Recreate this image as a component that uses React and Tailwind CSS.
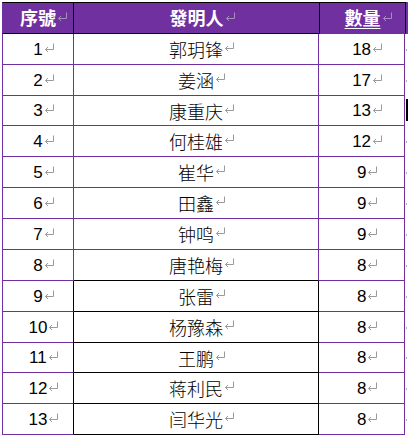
const rows = [
  ['1', '郭玥锋', '18'],
  ['2', '姜涵', '17'],
  ['3', '康重庆', '13'],
  ['4', '何桂雄', '12'],
  ['5', '崔华', '9'],
  ['6', '田鑫', '9'],
  ['7', '钟鸣', '9'],
  ['8', '唐艳梅', '8'],
  ['9', '张雷', '8'],
  ['10', '杨豫森', '8'],
  ['11', '王鹏', '8'],
  ['12', '蒋利民', '8'],
  ['13', '闫华光', '8'],
];

const tall = [31, 31, 30, 31, 31, 31, 31, 31, 31, 31, 30, 31, 31];

function Mark({ light }) {
  return (
    <svg
      width="11"
      height="10"
      viewBox="0 0 11 10"
      className="absolute left-full top-[2px] ml-[1px]"
      fill="none"
      stroke={light ? '#a68fbf' : '#9a9a9a'}
      strokeWidth="1"
    >
      <path d="M9.5 0.5V6.5H1.5" />
      <path d="M4 4L1.5 6.5L4 9" />
    </svg>
  );
}

function Text({ children, light }) {
  return (
    <span className="relative inline-block">
      {children}
      <Mark light={light} />
    </span>
  );
}

export default function App() {
  return (
    <div
      className="w-[408px] h-[437px] bg-white pt-[2px] pl-[2px] relative"
      style={{ fontFamily: '"Liberation Sans", "Noto Sans CJK SC", sans-serif' }}
    >
      {/* header */}
      <div className="flex h-[32px] bg-[#7030a0] text-white font-bold text-[18px] leading-none">
        <div className="w-[72px] border-t border-l border-r border-b border-t-black border-l-[#7030a0] border-r-black border-b-black flex items-center justify-center pt-[2px]">
          <Text light>序號</Text>
        </div>
        <div className="w-[246px] border-t border-r border-b border-t-black border-r-black border-b-black flex items-center justify-center pt-[2px]">
          <Text light>發明人</Text>
        </div>
        <div className="w-[86px] border-t border-r border-b border-t-black border-r-black border-b-[#7030a0] flex items-center justify-center pt-[2px]">
          <Text light>
            <span className="underline underline-offset-[3px]">數量</span>
          </Text>
        </div>
      </div>

      {rows.map(([n, name, count], i) => {
        const late = i >= 8;
        return (
          <div
            key={n}
            className={
              (tall[i] === 30 ? 'h-[30px]' : 'h-[31px]') +
              ' flex text-[17px] leading-none text-black'
            }
          >
            <div
              className={
                'w-[72px] border-l border-r border-b border-l-[#7030a0] border-b-[#7030a0] flex items-center justify-center ' +
                (late ? 'border-r-black' : 'border-r-[#7030a0]')
              }
            >
              <Text>{n}</Text>
            </div>
            <div
              className={
                'w-[246px] border-r border-b flex items-center justify-center text-[18px] ' +
                (late || i === 7
                  ? 'border-b-black ' + (late ? 'border-r-black' : 'border-r-[#7030a0]')
                  : 'border-b-[#7030a0] border-r-[#7030a0]')
              }
              style={{ fontFamily: '"Noto Sans CJK SC", sans-serif', fontWeight: 300 }}
            >
              <Text>{name}</Text>
            </div>
            <div className="w-[86px] border-r border-b border-r-[#7030a0] border-b-[#7030a0] flex items-center justify-center">
              <Text>{count}</Text>
            </div>
            <div className="w-[3px] flex items-center justify-center">
              <span className="w-[1px] h-[2px] bg-[#b0b0b0]" />
            </div>
          </div>
        );
      })}

      <span className="absolute left-[406px] top-[99px] w-[2px] h-[22px] bg-black" />
    </div>
  );
}
